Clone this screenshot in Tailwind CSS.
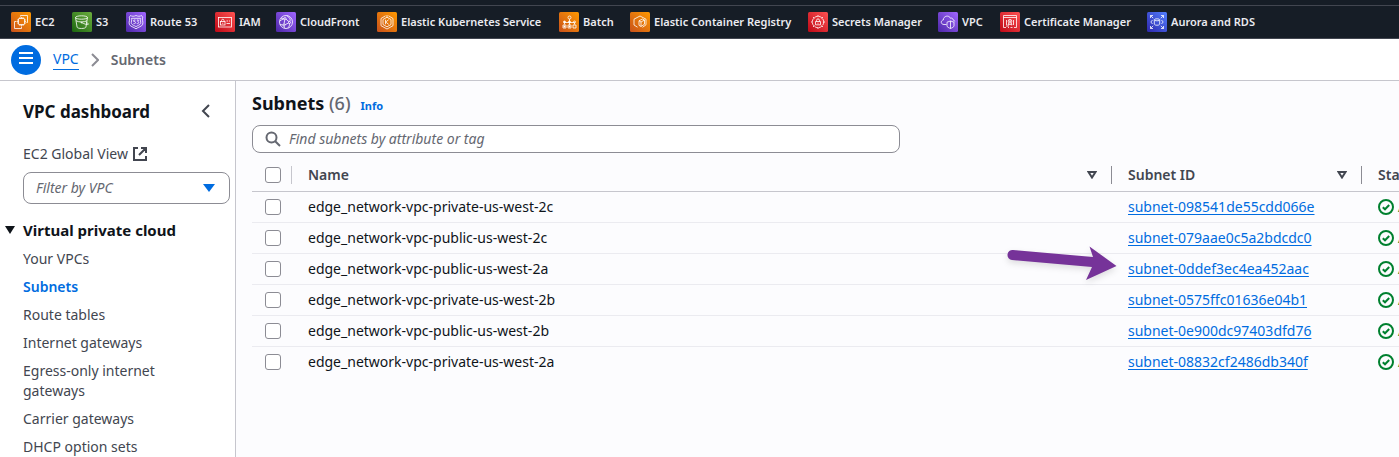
<!DOCTYPE html>
<html lang="en">
<head>
<meta charset="utf-8">
<meta name="viewport" content="width=device-width, initial-scale=1">
<title>Subnets | VPC Console</title>
<script src="https://cdn.jsdelivr.net/npm/@tailwindcss/browser@4"></script>
</head>
<body class="flex h-screen flex-col overflow-hidden bg-white font-['Noto_Sans',sans-serif] text-sm leading-5 text-[#0f141a]">

<!-- Gradients shared by the service icons -->
<svg class="absolute h-0 w-0" aria-hidden="true">
  <defs>
    <linearGradient id="orange" x1="0" y1="1" x2="1" y2="0"><stop offset="0" stop-color="#c8511b"/><stop offset="1" stop-color="#f90"/></linearGradient>
    <linearGradient id="green" x1="0" y1="1" x2="1" y2="0"><stop offset="0" stop-color="#1b660f"/><stop offset="1" stop-color="#6cae3e"/></linearGradient>
    <linearGradient id="purple" x1="0" y1="1" x2="1" y2="0"><stop offset="0" stop-color="#4d27a8"/><stop offset="1" stop-color="#a166ff"/></linearGradient>
    <linearGradient id="red" x1="0" y1="1" x2="1" y2="0"><stop offset="0" stop-color="#bd0816"/><stop offset="1" stop-color="#ff5252"/></linearGradient>
    <linearGradient id="blue" x1="0" y1="1" x2="1" y2="0"><stop offset="0" stop-color="#2e27ad"/><stop offset="1" stop-color="#527fff"/></linearGradient>
  </defs>
</svg>

<nav aria-label="Favorites" class="shrink-0 bg-[#161d26] pt-[5px]">
  <ul class="grid h-[34px] grid-cols-[61px_54px_89px_61px_101px_182px_71px_178px_130px_62px_147px_auto] items-center border-y border-[#424650] pl-[11px] text-[11px] font-semibold whitespace-nowrap text-[#ebebf0]">
    <li><a href="#" class="flex items-center gap-1"><svg class="size-5 shrink-0" viewBox="0 0 20 20" fill="none" stroke="#fff" stroke-width=".8"><rect width="20" height="20" rx="1.5" fill="url(#orange)" stroke="none"/><rect x="7.500" y="6.500" width="6" height="6" rx=".5"/><path d="M9 5v1.500M10.500 5v1.500M12 5v1.500M9 12.500V14M10.500 12.500V14M12 12.500V14M6 8h1.500M6 9.500h1.500M6 11h1.500M13.500 8H15M13.500 9.500H15M13.500 11H15M9.500 4.500V3.500h7v7h-1M5.500 9.500h-2v7h7v-2"/></svg>EC2</a></li>
    <li><a href="#" class="flex items-center gap-1"><svg class="size-5 shrink-0" viewBox="0 0 20 20" fill="none" stroke="#fff" stroke-width=".8"><rect width="20" height="20" rx="1.5" fill="url(#green)" stroke="none"/><ellipse cx="9.500" cy="5.500" rx="6" ry="1.700"/><path d="M3.500 5.500l1.600 9.700c.5 1.700 8.300 1.700 8.800 0l1.600-9.700M9.500 10.500c3 1.700 6.300 2.500 6.800 1.800.4-.6-1-1.400-2-2M4.200 8.800c2 1.500 8.600 1.500 10.700 0"/><circle cx="9.500" cy="10.500" r=".5"/></svg>S3</a></li>
    <li><a href="#" class="flex items-center gap-1"><svg class="size-5 shrink-0" viewBox="0 0 20 20" fill="none" stroke="#fff" stroke-width=".8"><rect width="20" height="20" rx="1.500" fill="url(#purple)" stroke="none"/><path d="M10 3.500c-2 1-4 1-5.500 0L3.300 5.200c1.200 2.500-.8 4.300 0 7 .8 2.500 4.200 2.600 6.700 4.600 2.500-2 5.900-2.100 6.700-4.600.8-2.700-1.200-4.500 0-7l-1.200-1.700c-1.500 1-3.500 1-5.500 0z"/><path d="M5.500 6.300h9c-.8 2 .7 3.500.1 5.200-.6 1.600-2.900 1.900-4.600 3.100-1.700-1.200-4-1.500-4.600-3.100-.6-1.700.9-3.200.1-5.200z"/><path d="M9.500 8H7.800v1.600h1c1 0 1 2-.2 2H7.500M10.800 8h1.700l-.8 1.400c1.300 0 1.300 2.200 0 2.200h-1"/></svg>Route 53</a></li>
    <li><a href="#" class="flex items-center gap-1"><svg class="size-5 shrink-0" viewBox="0 0 20 20" fill="none" stroke="#fff" stroke-width=".8"><rect width="20" height="20" rx="1.500" fill="url(#red)" stroke="none"/><rect x="3.500" y="5.500" width="13" height="9.500"/><rect x="5.500" y="9.500" width="4.500" height="3.500"/><path d="M6.500 9.500V8.500c0-1.700 2.500-1.700 2.500 0v1M7.750 10.700v1.200M11.500 9h1.500M14 9h1M11.500 11.500h3.500"/></svg>IAM</a></li>
    <li><a href="#" class="flex items-center gap-1"><svg class="size-5 shrink-0" viewBox="0 0 20 20" fill="none" stroke="#fff" stroke-width=".8"><rect width="20" height="20" rx="1.500" fill="url(#purple)" stroke="none"/><circle cx="10" cy="10" r="6.500"/><circle cx="9" cy="6.500" r="1"/><circle cx="13.500" cy="10.500" r="1"/><circle cx="8" cy="13" r="1"/><path d="M8.800 7.500L8 12M9.900 7l3 2.700M12.600 11L9 12.700M5 6.200l3 .2M4 12.500l3 .5M11 3.800c3 2 3.800 4 2.700 5.700M13.500 11.500c.2 1.700-.3 3-1.500 4.300M8 14c0 1 .3 1.700 1 2.300M3.800 9C5 8 6.500 7.200 8.100 6.900"/></svg>CloudFront</a></li>
    <li><a href="#" class="flex items-center gap-1"><svg class="size-5 shrink-0" viewBox="0 0 20 20" fill="none" stroke="#fff" stroke-width=".8"><rect width="20" height="20" rx="1.500" fill="url(#orange)" stroke="none"/><path d="M8.500 3.800L4 6.500v7.200l6 3.300 6-3.300V6.500l-4.500-2.700M10 3v2.200"/><path d="M10 5.200L6 7.500v5l4 2.300 4-2.300v-5z"/><path d="M8.500 7.700v4.600M11.700 7.700L8.700 10l3 2.400"/></svg>Elastic Kubernetes Service</a></li>
    <li><a href="#" class="flex items-center gap-1"><svg class="size-5 shrink-0" viewBox="0 0 20 20" fill="none" stroke="#fff" stroke-width=".8"><rect width="20" height="20" rx="1.500" fill="url(#orange)" stroke="none"/><circle cx="10.500" cy="5.500" r="1.500"/><path d="M10.500 7v6M5.500 12.500v-2h10v2M6.500 10.500h-1"/><circle cx="5.500" cy="10" r="1" fill="#fff"/><circle cx="10.500" cy="10" r="1" fill="#fff"/><circle cx="15.500" cy="10" r="1"/><path d="M4 13h3v3H4zM9 13h3v3H9zM14 13h3v3h-3z"/><path d="M5 14h1v1H5zM10 14h1v1h-1z" fill="#fff"/></svg>Batch</a></li>
    <li><a href="#" class="flex items-center gap-1"><svg class="size-5 shrink-0" viewBox="0 0 20 20" fill="none" stroke="#fff" stroke-width=".8"><rect width="20" height="20" rx="1.500" fill="url(#orange)" stroke="none"/><path d="M7.500 15.200L4 13V7.200L10 4l6 3.200v5.600l-3.500 2.500"/><path d="M9 8.800L12.500 7l2 1v4.200L11 14.500l-2-1.200zM9 8.800l2 1.200v4.500M11 10l3.500-2"/></svg>Elastic Container Registry</a></li>
    <li><a href="#" class="flex items-center gap-1"><svg class="size-5 shrink-0" viewBox="0 0 20 20" fill="none" stroke="#fff" stroke-width=".8"><rect width="20" height="20" rx="1.500" fill="url(#red)" stroke="none"/><circle cx="10" cy="10" r="5.700" stroke-dasharray="3.400 1.070"/><path d="M10 3v2M10 15v2M3 10h2M15 10h2M5 5l1.500 1.500M13.500 13.500L15 15M15 5l-1.500 1.500M5 15l1.500-1.500M7.500 9.500h5v3.300h-5zM8.500 9.500V8.300c0-1.900 3-1.900 3 0v1.200M10 10.700v1"/></svg>Secrets Manager</a></li>
    <li><a href="#" class="flex items-center gap-1"><svg class="size-5 shrink-0" viewBox="0 0 20 20" fill="none" stroke="#fff" stroke-width=".8"><rect width="20" height="20" rx="1.500" fill="url(#purple)" stroke="none"/><path d="M8.500 12.500H6C2.600 12.500 2.400 8.500 5.300 8c0-4.200 5.800-5.300 7.200-1.700 1.400-.7 2.500.2 2.500 1.500 1 .2 1.600.8 1.700 1.700"/><path d="M12.500 9l3.500 1.200v3.600c0 1.200-1.700 2-3.500 2.700-1.800-.7-3.500-1.500-3.500-2.700v-3.600zM12.500 9v7.500"/></svg>VPC</a></li>
    <li><a href="#" class="flex items-center gap-1"><svg class="size-5 shrink-0" viewBox="0 0 20 20" fill="none" stroke="#fff" stroke-width=".8"><rect width="20" height="20" rx="1.500" fill="url(#red)" stroke="none"/><path d="M6 15.500H3.500v-12h13v12H14M3.500 5.500h13M6.500 8v5M13.500 8v5"/><circle cx="10" cy="9.200" r="1.800"/><path d="M10 8.300v1.800M9.200 9.200h1.600M8.900 10.700L8 13l2-.8 2 .8-.9-2.300M8 15.500h1M10.500 15.500h2M6 14h3"/></svg>Certificate Manager</a></li>
    <li><a href="#" class="flex items-center gap-1"><svg class="size-5 shrink-0" viewBox="0 0 20 20" fill="none" stroke="#fff" stroke-width=".8"><rect width="20" height="20" rx="1.500" fill="url(#blue)" stroke="none"/><path d="M3.500 6V3.500H6M3.500 3.500l2.700 2.700M14 3.500h2.500V6M16.500 3.500l-2.700 2.700M3.500 14v2.500H6M3.500 16.500l2.700-2.700M14 16.500h2.500V14M16.500 16.500l-2.700-2.700"/><ellipse cx="10" cy="7.800" rx="2.700" ry="1"/><path d="M7.300 7.800v4.400c0 1.400 5.400 1.400 5.400 0V7.800M5.500 8l-1.700 2 1.700 2M14.500 8l1.700 2-1.700 2"/></svg>Aurora and RDS</a></li>
  </ul>
</nav>

<header class="flex h-[42px] shrink-0 items-center border-b border-[#c6c6cd] pl-[11px]">
  <button type="button" aria-label="Open navigation" class="grid size-[30px] place-items-center rounded-full bg-[#006ce0]">
    <svg class="size-4" viewBox="0 0 16 16" stroke="#fff" stroke-width="2"><path d="M1 1h14M1 6h14M1 11h14"/></svg>
  </button>
  <nav aria-label="Breadcrumb" class="ml-3">
    <ol class="flex items-center gap-3">
      <li><a href="#" class="block border-b border-[#006ce0] text-[#006ce0]">VPC</a></li>
      <li aria-hidden="true"><svg class="h-4 w-2" viewBox="0 0 8 16" fill="none" stroke="#8c8c94" stroke-width="2"><path d="M1 2l6 6-6 6"/></svg></li>
      <li class="font-semibold text-[#656871]">Subnets</li>
    </ol>
  </nav>
</header>

<div class="flex min-h-0 flex-1">
  <aside class="w-[236px] shrink-0 overflow-hidden border-r border-[#c6c6cd] pt-[19px] pr-[5px] pl-[23px] text-[#424650]">
    <div class="flex items-center justify-between pr-[18px]">
      <h2 class="text-[17px] leading-6 font-bold text-[#0f141a]">VPC dashboard</h2>
      <button type="button" aria-label="Close navigation"><svg class="h-4 w-3" viewBox="0 0 12 16" fill="none" stroke="#424650" stroke-width="2"><path d="M9 1L3 7l6 6"/></svg></button>
    </div>
    <a href="#" class="mt-5 flex items-center gap-1">EC2 Global View
      <svg class="size-4" viewBox="0 0 16 16" fill="none" stroke="#424650" stroke-width="2"><path d="M6 2H2v12h12v-4M9 2h5v5M14 2L7 9"/></svg></a>
    <div class="relative mt-2">
      <select aria-label="Filter by VPC" class="h-8 w-full appearance-none rounded-lg border border-[#8c8c94] bg-white px-3 text-[#656871] italic"><option>Filter by VPC</option></select>
      <svg class="pointer-events-none absolute top-3 right-[15px] h-2 w-3" viewBox="0 0 12 8" fill="#006ce0"><path d="M0 0h12L6 8z"/></svg>
    </div>
    <h3 class="mt-4 -ml-[18px] text-[15px] leading-5 font-bold text-[#0f141a]">
      <button type="button" class="flex items-center gap-2"><svg class="h-2 w-2.5" viewBox="0 0 10 8" fill="#0f141a"><path d="M0 0h10L5 8z"/></svg>Virtual private cloud</button>
    </h3>
    <ul class="mt-2 flex flex-col gap-2 pt-px pr-12">
      <li><a href="#">Your VPCs</a></li>
      <li><a href="#" class="font-semibold text-[#006ce0]">Subnets</a></li>
      <li><a href="#">Route tables</a></li>
      <li><a href="#">Internet gateways</a></li>
      <li><a href="#">Egress-only internet gateways</a></li>
      <li><a href="#">Carrier gateways</a></li>
      <li><a href="#">DHCP option sets</a></li>
    </ul>
  </aside>

  <main class="min-w-0 flex-1 overflow-hidden bg-[#fcfcfe] pt-2.5 pl-4">
    <div class="flex items-baseline gap-2.5">
      <h1 class="text-lg leading-6 font-bold">Subnets <span class="font-medium text-[#656871]">(6)</span></h1>
      <a href="#" class="text-[11px] leading-5 font-bold text-[#006ce0]">Info</a>
    </div>
    <label class="mt-[9px] flex h-7 w-[648px] max-w-full items-center gap-2 rounded-lg border border-[#8c8c94] bg-white px-3">
      <svg class="size-4" viewBox="0 0 16 16" fill="none" stroke="#656871" stroke-width="2"><circle cx="6.500" cy="6.500" r="5"/><path d="M10.200 10.200L15 15"/></svg>
      <input type="search" aria-label="Find subnets" placeholder="Find subnets by attribute or tag" class="min-w-0 flex-1 italic outline-none placeholder:text-[#656871]">
    </label>
    <table class="mt-[7px] w-[1359px] table-fixed border-collapse text-left">
      <colgroup><col class="w-10"><col class="w-[820px]"><col class="w-[250px]"><col></colgroup>
      <thead class="text-[#424650]">
        <tr class="h-[31px] border-b border-[#c6c6cd]">
          <th class="p-0"><div class="flex items-center justify-between pl-[13px]"><input type="checkbox" aria-label="Select all subnets" class="size-4 appearance-none rounded-[3px] border border-[#8c8c94] bg-white"><span class="h-[18px] w-px bg-[#c6c6cd]"></span></div></th>
          <th class="p-0"><div class="flex items-center pl-4 font-semibold">Name<button type="button" aria-label="Sort by name" class="mr-3.5 ml-auto"><svg class="h-2 w-2.5" viewBox="0 0 10 8" fill="none" stroke="#424650" stroke-width="2"><path d="M1.500 1h7L5 6.500z"/></svg></button><span class="h-[18px] w-px bg-[#8c8c94]"></span></div></th>
          <th class="p-0"><div class="flex items-center pl-4 font-semibold">Subnet ID<button type="button" aria-label="Sort by subnet ID" class="mr-3.5 ml-auto"><svg class="h-2 w-2.5" viewBox="0 0 10 8" fill="none" stroke="#424650" stroke-width="2"><path d="M1.500 1h7L5 6.500z"/></svg></button><span class="h-[18px] w-px bg-[#8c8c94]"></span></div></th>
          <th class="p-0 pl-4 font-semibold">State</th>
        </tr>
      </thead>
      <tbody id="rows"></tbody>
    </table>
  </main>
</div>

<template id="row">
  <tr class="h-[31px] border-b border-[#ebebf0] last:border-b-0">
    <td class="p-0 pl-[13px]"><input type="checkbox" class="block size-4 appearance-none rounded-[3px] border border-[#8c8c94] bg-white"></td>
    <td class="p-0 pl-4"></td>
    <td class="relative p-0 pl-4"><a href="#" class="text-[#006ce0] underline underline-offset-2"></a></td>
    <td class="p-0 pl-4"><span class="flex items-center gap-1 text-[#00802f]"><svg class="size-4" viewBox="0 0 16 16" fill="none" stroke="#00802f" stroke-width="2"><circle cx="8" cy="8" r="7"/><path d="M4.800 8.200l2.200 2.100 4.200-4.300"/></svg>Available</span></td>
  </tr>
</template>
<template id="arrow">
  <svg class="pointer-events-none absolute -top-[14px] -left-28 h-12 w-32 drop-shadow-md" viewBox="0 0 128 48" fill="#763399" aria-hidden="true"><path d="M13 10L93 17l-3.500-10.500L116.500 26 86 40l6-13L12 20A5 5 0 0 1 13 10z"/></svg>
</template>
<script>
const subnets = [
  ['edge_network-vpc-private-us-west-2c', 'subnet-098541de55cdd066e'],
  ['edge_network-vpc-public-us-west-2c', 'subnet-079aae0c5a2bdcdc0'],
  ['edge_network-vpc-public-us-west-2a', 'subnet-0ddef3ec4ea452aac', true],
  ['edge_network-vpc-private-us-west-2b', 'subnet-0575ffc01636e04b1'],
  ['edge_network-vpc-public-us-west-2b', 'subnet-0e900dc97403dfd76'],
  ['edge_network-vpc-private-us-west-2a', 'subnet-08832cf2486db340f'],
];
for (const [name, id, marked] of subnets) {
  const tr = document.getElementById('row').content.cloneNode(true);
  const cells = tr.querySelectorAll('td');
  tr.querySelector('input').setAttribute('aria-label', 'Select ' + name);
  cells[1].textContent = name;
  cells[2].querySelector('a').textContent = id;
  if (marked) cells[2].append(document.getElementById('arrow').content.cloneNode(true));
  document.getElementById('rows').append(tr);
}
</script>
</body>
</html>
